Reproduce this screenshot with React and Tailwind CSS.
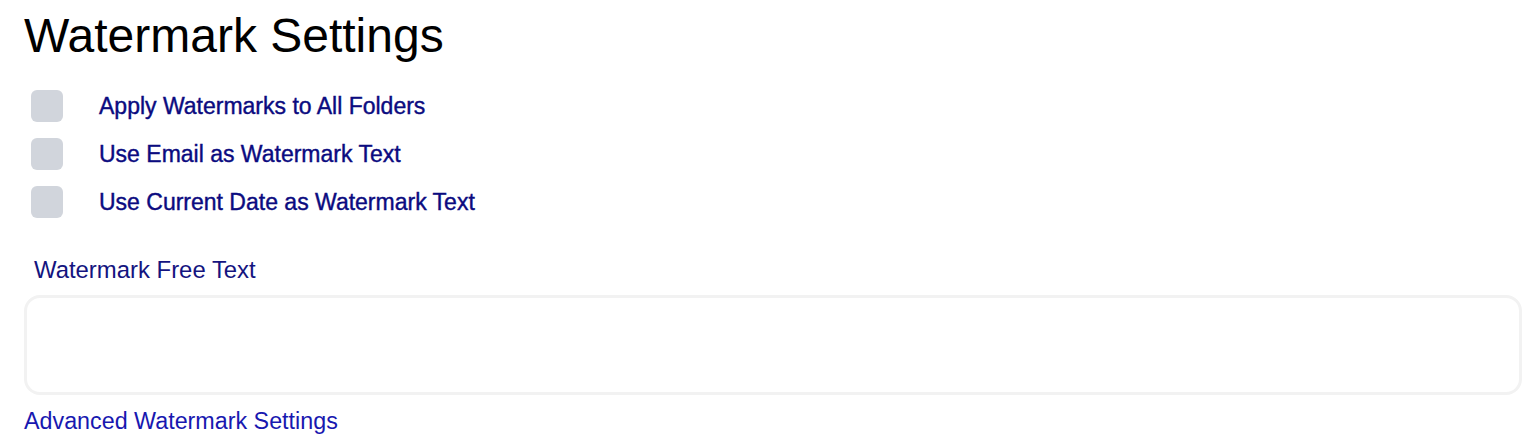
import React from 'react';

const options = [
  'Apply Watermarks to All Folders',
  'Use Email as Watermark Text',
  'Use Current Date as Watermark Text',
];

const App = () => {
  return (
    <div className="min-h-screen bg-white pl-6 pr-[18px] pt-[8px] font-['Liberation_Sans',Arial,sans-serif]">
      <h1 className="text-[48px] leading-[56px] text-black">Watermark Settings</h1>
      <div className="mt-[26px] flex flex-col gap-4 pl-[7px]">
        {options.map((label) => (
          <label key={label} className="flex items-center gap-9 cursor-pointer">
            <input type="checkbox" className="peer sr-only" />
            <span className="w-8 h-8 rounded-md bg-gray-300 shrink-0" />
            <span className="text-[23px] leading-8 text-[#0b0b80] [-webkit-text-stroke:0.4px_#0b0b80]">{label}</span>
          </label>
        ))}
      </div>
      <div className="mt-[38px] pl-[10px] text-[23.9px] leading-[28px] text-[#14147f]">
        Watermark Free Text
      </div>
      <textarea className="mt-[11px] block w-full h-[100px] rounded-2xl border-[3px] border-[#f2f2f2] resize-none outline-none" />
      <a href="#" className="mt-[12px] inline-block text-[23.3px] leading-[28px] text-[#1818b0]">
        Advanced Watermark Settings
      </a>
    </div>
  );
};

export default App;
